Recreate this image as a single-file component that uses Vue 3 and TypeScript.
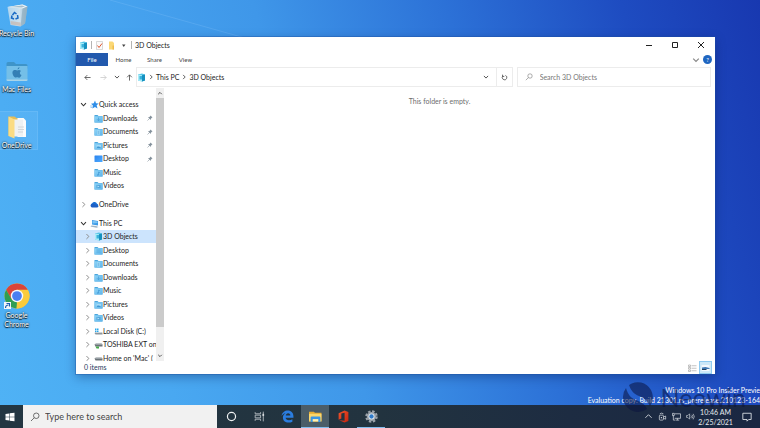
<script setup lang="ts">
import { ref } from 'vue'

interface TreeNode {
  id: string
  label: string
  icon: string
  level: 0 | 1
  open?: boolean
  expandable?: boolean
  pinned?: boolean
  spaced?: boolean
}

interface Shortcut {
  label: string
  icon: string
  row: number
  focused?: boolean
  linked?: boolean
}

const tree: TreeNode[] = [
  { id: 'quick', label: 'Quick access', icon: 'star', level: 0, open: true, expandable: true },
  { id: 'q-down', label: 'Downloads', icon: 'downloads', level: 1, pinned: true },
  { id: 'q-docs', label: 'Documents', icon: 'documents', level: 1, pinned: true },
  { id: 'q-pics', label: 'Pictures', icon: 'pictures', level: 1, pinned: true },
  { id: 'q-desk', label: 'Desktop', icon: 'screen', level: 1, pinned: true },
  { id: 'q-music', label: 'Music', icon: 'music', level: 1 },
  { id: 'q-video', label: 'Videos', icon: 'videos', level: 1 },
  { id: 'onedrive', label: 'OneDrive', icon: 'cloud', level: 0, expandable: true, spaced: true },
  { id: 'pc', label: 'This PC', icon: 'pc', level: 0, open: true, expandable: true, spaced: true },
  { id: 'p-3d', label: '3D Objects', icon: 'cube', level: 1, expandable: true },
  { id: 'p-desk', label: 'Desktop', icon: 'desktop', level: 1, expandable: true },
  { id: 'p-docs', label: 'Documents', icon: 'documents', level: 1, expandable: true },
  { id: 'p-down', label: 'Downloads', icon: 'downloads', level: 1, expandable: true },
  { id: 'p-music', label: 'Music', icon: 'music', level: 1, expandable: true },
  { id: 'p-pics', label: 'Pictures', icon: 'pictures', level: 1, expandable: true },
  { id: 'p-video', label: 'Videos', icon: 'videos', level: 1, expandable: true },
  { id: 'p-c', label: 'Local Disk (C:)', icon: 'disk', level: 1, expandable: true },
  { id: 'p-ext', label: 'TOSHIBA EXT on', icon: 'netdisk', level: 1, expandable: true },
  { id: 'p-home', label: "Home on 'Mac' (", icon: 'netdrive', level: 1, expandable: true },
]

const shortcuts: Shortcut[] = [
  { label: 'Recycle Bin', icon: 'bin', row: 1 },
  { label: 'Mac Files', icon: 'macfolder', row: 2 },
  { label: 'OneDrive', icon: 'openfolder', row: 3, focused: true },
  { label: 'Google Chrome', icon: 'chrome', row: 6, linked: true },
]

const tabs = ['Home', 'Share', 'View']

const apps = [
  { name: 'Cortana', icon: 'cortana' },
  { name: 'Task View', icon: 'taskview' },
  { name: 'Microsoft Edge', icon: 'edge' },
  { name: 'File Explorer', icon: 'explorer', state: 'active' },
  { name: 'Office', icon: 'office' },
  { name: 'Settings', icon: 'gear', state: 'running' },
]

const tray = [
  { name: 'Show hidden icons', icon: 'up-chevron' },
  { name: 'Meet Now', icon: 'meet' },
  { name: 'Network', icon: 'network' },
  { name: 'Volume', icon: 'volume' },
]

const selected = ref('p-3d')
const folderQuery = ref('')
const webQuery = ref('')
</script>

<template>
  <div class="screen">
    <svg class="sprite" width="0" height="0" aria-hidden="true">
      <defs>
        <linearGradient id="g-folder" x1="0" y1="0" x2="1" y2="1">
          <stop offset="0" stop-color="#8fd4f7" /><stop offset="1" stop-color="#5db4ea" />
        </linearGradient>
        <linearGradient id="g-screen" x1="0" y1="0" x2="1" y2="1">
          <stop offset="0" stop-color="#2a83ee" /><stop offset="1" stop-color="#4fabff" />
        </linearGradient>
        <linearGradient id="g-bin" x1="0" y1="0" x2="1" y2="0">
          <stop offset="0" stop-color="#b9d9ef" /><stop offset=".6" stop-color="#d8e6ee" /><stop offset="1" stop-color="#98b7cb" />
        </linearGradient>
        <linearGradient id="g-office" x1="0" y1="0" x2="1" y2="1">
          <stop offset="0" stop-color="#f0552c" /><stop offset="1" stop-color="#c8230f" />
        </linearGradient>
      </defs>
      <symbol id="folder" viewBox="0 0 18 18">
        <path d="M1 2h6l2 2h8v13H1z" fill="#4aa6dd" />
        <path d="M1 4.500h16v12.500H1z" fill="url(#g-folder)" />
      </symbol>
      <symbol id="downloads" viewBox="0 0 18 18">
        <use href="#folder" /><path d="M9 7v6M6 10.500l3 3 3-3" fill="none" stroke="#3f97d3" stroke-width="1.300" />
      </symbol>
      <symbol id="documents" viewBox="0 0 18 18">
        <use href="#folder" /><path d="M6 7h6v8H6z" fill="#a9def8" /><path d="M7 9h4M7 11h4M7 13h4" stroke="#4fa3d9" />
      </symbol>
      <symbol id="pictures" viewBox="0 0 18 18">
        <use href="#folder" /><path d="M5 8h9v6H5z" fill="#a5dbf7" /><path d="M5 14l3-4 2 2 2-1 2 3z" fill="#3f97d3" />
      </symbol>
      <symbol id="music" viewBox="0 0 18 18">
        <use href="#folder" /><path d="M9 14V8l3 1.500" fill="none" stroke="#3f97d3" stroke-width="1.300" /><circle cx="7.800" cy="13.800" r="1.500" fill="#3f97d3" />
      </symbol>
      <symbol id="videos" viewBox="0 0 18 18">
        <use href="#folder" /><path d="M5 8h8v6H5z" fill="#4fa3d9" /><path d="M7 9l4 2-4 2z" fill="#b8e4fa" />
      </symbol>
      <symbol id="desktop" viewBox="0 0 18 18">
        <use href="#folder" /><path d="M5 8h8M5 12h8" stroke="#4fa3d9" stroke-width="1.500" />
      </symbol>
      <symbol id="screen" viewBox="0 0 18 18"><rect x="1" y="3" width="16" height="13" rx="1" fill="url(#g-screen)" /></symbol>
      <symbol id="star" viewBox="0 0 18 18">
        <path d="M10 1l2 5.500 5.500.5-4.200 3.700L15 17l-5-3-5.500 3 1.500-6L2 7.500l5.500-.8z" fill="#2f8ee8" />
        <path d="M0 12h5M1 15h3" stroke="#7dbcf2" stroke-width="1.500" />
      </symbol>
      <symbol id="cloud" viewBox="0 0 18 18">
        <path d="M4 14a4 4 0 0 1 .3-7.500A5.500 5.500 0 0 1 14 7.500a3.500 3.500 0 0 1 .5 6.500z" fill="#1a6fd4" />
        <path d="M4 15a3.500 3.500 0 0 1-1-6.500l4-1L17 12a3 3 0 0 1-2.500 3z" fill="#1e5fc4" />
      </symbol>
      <symbol id="pc" viewBox="0 0 18 18">
        <path d="M4 2l12 2v9L4 11z" fill="#3c9ae6" /><path d="M5 3.500l10 1.500v3L5 9z" fill="#7cc4f5" />
        <path d="M3 13l9 1 5 2-4 1.500L1 15z" fill="#9fb4c4" />
      </symbol>
      <symbol id="cube" viewBox="0 0 18 18">
        <path d="M2 3l8-2 6 2v12l-6 2-8-2z" fill="#56c5e8" /><path d="M2 3l8 1.500V17l-8-2z" fill="#a9ecf7" />
        <path d="M10 4.500L16 3v12l-6 2z" fill="#1690bf" /><path d="M5 6h5v7H5z" fill="#3ab3dc" />
      </symbol>
      <symbol id="disk" viewBox="0 0 18 18">
        <path d="M1 12l3-2h11l2 2v3H3z" fill="#8d979e" /><path d="M4 10h11l2 2H2z" fill="#d0d7dc" />
        <path d="M2 3h3v3H2zM6 3h3v3H6zM2 7h3v3H2zM6 7h3v3H6z" fill="#28a8ea" />
      </symbol>
      <symbol id="netdrive" viewBox="0 0 18 18">
        <path d="M1 9l3-2h11l2 2v4H3z" fill="#6b7378" /><path d="M4 7h11l2 2H2z" fill="#cbd1d5" />
      </symbol>
      <symbol id="netdisk" viewBox="0 0 18 18">
        <use href="#netdrive" /><path d="M3 13h7v4H5z" fill="#45a849" />
      </symbol>
      <symbol id="pin" viewBox="0 0 12 12">
        <path d="M7 1l4 4-1.200.4-2 2L7.500 10 2 4.500 5 4l1.500-1.800z" fill="#84919c" /><path d="M1 11l4-4" stroke="#84919c" stroke-width="1.200" />
      </symbol>
      <symbol id="right" viewBox="0 0 10 10"><path d="M3.500 1.500L7 5 3.500 8.500" fill="none" stroke="currentColor" stroke-width="1.400" /></symbol>
      <symbol id="down" viewBox="0 0 10 10"><path d="M1.500 3.200L5 6.800l3.500-3.600" fill="none" stroke="currentColor" stroke-width="1.500" /></symbol>
      <symbol id="up-chevron" viewBox="0 0 20 20"><path d="M3 13l7-7 7 7" fill="none" stroke="currentColor" stroke-width="1.800" /></symbol>
      <symbol id="arrow" viewBox="0 0 16 16"><path d="M15 8H2M7.500 2.500L2 8l5.500 5.500" fill="none" stroke="currentColor" stroke-width="1.800" /></symbol>
      <symbol id="lens" viewBox="0 0 20 20">
        <circle cx="12.500" cy="7.500" r="5.500" fill="none" stroke="currentColor" stroke-width="1.500" />
        <path d="M8.500 11.500L2 18" stroke="currentColor" stroke-width="1.500" />
      </symbol>
      <symbol id="bin" viewBox="0 0 48 48">
        <path d="M5 8l30-5 10 4-5 34-9 6-20-3z" fill="url(#g-bin)" opacity=".92" />
        <path d="M5 8l30-5 10 4-10 4z" fill="#eaf3f8" /><path d="M10 8l24-3 6 2-7 2z" fill="#a4bdcb" />
        <path d="M35 11l10-4-5 34-9 6z" fill="#8eacbd" opacity=".7" />
        <path d="M11 36l20 3v7l-19-3z" fill="#c9b7ad" opacity=".7" />
        <path d="M15 24l4-5 4 3M25 24l1 6-5 2M18 32l-5-2 1-5" fill="none" stroke="#1768c4" stroke-width="3" />
      </symbol>
      <symbol id="macfolder" viewBox="0 0 48 48">
        <path d="M3 9q0-3 3-3h12l4 4h20q3 0 3 3v6H3z" fill="#3e94c9" />
        <path d="M3 14h42v28q0 2-3 2H6q-3 0-3-2z" fill="#74bfe8" /><path d="M3 41h42v1q0 2-3 2H6q-3 0-3-2z" fill="#aad4e8" />
        <path d="M25 21q0-4 4-5 0 4-4 5zM24 23c3-1 5-2 8 1-4 3-2 7 1 8-2 5-4 6-6 5-2-1-3-1-5 0-3 1-8-6-7-11 1-4 5-5 9-3z" fill="#347fb5" />
      </symbol>
      <symbol id="openfolder" viewBox="0 0 48 48">
        <path d="M7 3h12l4 3h15v36H7z" fill="#e3bd58" /><path d="M25 6h12l5 5v33H25z" fill="#fbfbfb" />
        <path d="M15 9h21v34H15z" fill="#eef1f3" /><path d="M26 24h12M26 29h12M26 34h10" stroke="#c8ccd0" stroke-width="1.500" />
        <path d="M7 3l12 6v38L7 42z" fill="#fbdc83" />
      </symbol>
      <symbol id="chrome" viewBox="0 0 48 48">
        <circle cx="24" cy="24" r="23" fill="#f9cb3c" />
        <path d="M24 24L13.500 30 4 12.500A23 23 0 0 1 44 12.500H24z" fill="#d9453a" />
        <path d="M4 12.500L14 30l10 5.500L23 47A23 23 0 0 1 4 12.500z" fill="#2f9e53" />
        <path d="M24 13h20.200A23 23 0 0 1 23 47l11-17z" fill="#f9cb3c" />
        <circle cx="24" cy="24" r="11.500" fill="#f6f9fc" /><circle cx="24" cy="24" r="9" fill="#4a7ff0" />
      </symbol>
      <symbol id="windows" viewBox="0 0 20 20">
        <path d="M1 4l7.500-1.100v6.600H1zM9.500 2.700L19 1.400v8.100H9.500zM1 10.500h7.500v6.600L1 16zM9.500 10.500H19v8.100l-9.500-1.300z" fill="#fff" />
      </symbol>
      <symbol id="cortana" viewBox="0 0 24 24"><circle cx="12" cy="12" r="7.500" fill="none" stroke="#f1f3f4" stroke-width="2.200" /></symbol>
      <symbol id="taskview" viewBox="0 0 24 24">
        <path d="M4 4v3h10V4M4 20v-3h10v3M4 9.500h10v5H4zM19 3v18" fill="none" stroke="#c3c9ce" stroke-width="1.500" /><path d="M17.500 7h3v4h-3z" fill="#d6dade" />
      </symbol>
      <symbol id="edge" viewBox="0 0 24 24">
        <path d="M1 11C2 4.500 7 1 12.500 1 19 1 23 5.500 23 12v2.500H8.500c.3 3 2.700 4.500 6 4.500 2.500 0 4.800-.7 6.500-1.800v4.500C19 22.800 16.500 23.300 14 23.300 7.500 23.300 3.500 19.500 3.500 14c0-3.500 2-6.500 5-8C5 6.500 2.500 8.500 1 11zm7.700-.7h8.600c0-2.600-1.500-4.300-4-4.300-2.600 0-4.200 1.800-4.600 4.300z" fill="#2b7de0" />
      </symbol>
      <symbol id="explorer" viewBox="0 0 24 24">
        <path d="M0 3h9l2 2h12v16H0z" fill="#e8ad33" /><path d="M0 7h23v14H0z" fill="#fbd76c" />
        <path d="M3 22v-8q0-2 2-2h14q2 0 2 2v8h-4v-5H7v5z" fill="#3a95e4" /><path d="M7 17h10v4H7z" fill="#fff0b8" />
      </symbol>
      <symbol id="office" viewBox="0 0 24 24">
        <path d="M14 1l7 2.500v17L14 23l-10-4 10 1V5L8 6.500v9L3 18V6z" fill="url(#g-office)" />
      </symbol>
      <symbol id="gear" viewBox="0 0 24 24">
        <circle cx="12" cy="12" r="9.500" fill="none" stroke="#9ba3ab" stroke-width="4" stroke-dasharray="4.500 2.960" />
        <circle cx="12" cy="12" r="8.500" fill="#9ba3ab" /><circle cx="12" cy="12" r="5.500" fill="#e4edf5" /><circle cx="12" cy="12" r="4" fill="#2f7ac8" />
      </symbol>
      <symbol id="meet" viewBox="0 0 20 20">
        <rect x="3" y="7" width="9" height="11" rx="2" fill="none" stroke="currentColor" stroke-width="1.500" />
        <path d="M12 11l5-2v7l-5-2M4 4q4-3 8 0" fill="none" stroke="currentColor" stroke-width="1.500" /><circle cx="7.500" cy="12.500" r="1.500" fill="currentColor" />
      </symbol>
      <symbol id="network" viewBox="0 0 20 20">
        <path d="M6 4h13v10H6M12 14v4M8 18h8M1 3h4v5H1zM3 8v10h4" fill="none" stroke="currentColor" stroke-width="1.500" />
      </symbol>
      <symbol id="volume" viewBox="0 0 20 20">
        <path d="M1 8h3l4-4v12l-4-4H1zM11 8q2 2 0 5M13.500 6q3.500 4 0 8.500M16 4q5 6 0 12.500" fill="none" stroke="currentColor" stroke-width="1.300" />
      </symbol>
      <symbol id="note" viewBox="0 0 24 24"><path d="M2 3h20v15h-6l-4 4v-4H2z" fill="none" stroke="#e6eaee" stroke-width="2" /></symbol>
    </svg>

    <main class="desktop">
      <svg class="rays" viewBox="0 0 760 405" preserveAspectRatio="none" aria-hidden="true">
        <path d="M110 0L245 38" stroke="#9cd0ff" opacity=".2" />
      </svg>

      <nav class="shortcuts" aria-label="Desktop">
        <button
          v-for="item in shortcuts"
          :key="item.label"
          type="button"
          class="shortcut"
          :class="[`row-${item.row}`, { focused: item.focused }]"
        >
          <span class="shortcut-art">
            <svg class="shortcut-icon" :class="{ large: item.linked }"><use :href="`#${item.icon}`" /></svg>
            <svg v-if="item.linked" class="link-badge" viewBox="0 0 14 14">
              <path d="M0 0h14v14H0z" fill="#f4f6f8" /><path d="M3 12q0-6 6-6M5 3h6v6" fill="none" stroke="#1c5fb0" stroke-width="2.200" />
            </svg>
          </span>
          <span class="shortcut-label" :class="{ wrap: item.linked }">{{ item.label }}</span>
        </button>
      </nav>

      <section class="window" aria-label="3D Objects">
        <header class="titlebar">
          <svg class="icon"><use href="#cube" /></svg>
          <span class="rule"></span>
          <button type="button" class="quick" aria-label="Properties">
            <svg class="icon" viewBox="0 0 18 18">
              <path d="M3 1h12v16H3z" fill="#fafafa" stroke="#b5b5b5" /><path d="M5 9l3 4 6-8" fill="none" stroke="#e0562f" stroke-width="2" />
            </svg>
          </button>
          <button type="button" class="quick" aria-label="New folder">
            <svg class="icon" viewBox="0 0 18 18"><path d="M4 1h7l3 3v13H4z" fill="#fbd877" /><path d="M11 9h3v8h-3z" fill="#eebc4c" /></svg>
          </button>
          <button type="button" class="quick" aria-label="Customize toolbar">
            <svg class="icon" viewBox="0 0 18 18"><path d="M6 7h7l-3.500 5z" fill="#444" /></svg>
          </button>
          <span class="rule"></span>
          <h1 class="title">3D Objects</h1>
          <div class="controls">
            <button type="button" aria-label="Minimize"><svg viewBox="0 0 10 10"><path d="M2 5.500h6" stroke="#222" /></svg></button>
            <button type="button" aria-label="Maximize"><svg viewBox="0 0 10 10"><path d="M2.500 2.500h5v5h-5z" fill="none" stroke="#222" /></svg></button>
            <button type="button" aria-label="Close"><svg viewBox="0 0 10 10"><path d="M2 2l6 6M8 2L2 8" stroke="#222" /></svg></button>
          </div>
        </header>

        <nav class="ribbon" aria-label="Ribbon">
          <button type="button" class="file">File</button>
          <button v-for="tab in tabs" :key="tab" type="button" class="tab">{{ tab }}</button>
          <button type="button" class="expand" aria-label="Expand ribbon"><svg><use href="#down" /></svg></button>
          <button type="button" class="help" aria-label="Help">?</button>
        </nav>

        <div class="location">
          <div class="travel">
            <button type="button" aria-label="Back"><svg class="arrow"><use href="#arrow" /></svg></button>
            <button type="button" aria-label="Forward" disabled><svg class="arrow forward"><use href="#arrow" /></svg></button>
            <button type="button" class="slim" aria-label="Recent locations"><svg class="tick"><use href="#down" /></svg></button>
            <button type="button" class="slim" aria-label="Up"><svg class="arrow upward"><use href="#arrow" /></svg></button>
          </div>
          <div class="address">
            <svg class="icon"><use href="#cube" /></svg>
            <svg class="tick"><use href="#right" /></svg>
            <a href="#this-pc">This PC</a>
            <svg class="tick"><use href="#right" /></svg>
            <a href="#3d-objects">3D Objects</a>
            <button type="button" class="history" aria-label="Previous locations"><svg class="tick"><use href="#down" /></svg></button>
            <button type="button" class="refresh" aria-label="Refresh">
              <svg viewBox="0 0 16 16"><path d="M4.500 4.500a5.200 5.200 0 1 0 5.500-1.200M3.500 1.500v4h4" fill="none" stroke="#333" stroke-width="1.600" /></svg>
            </button>
          </div>
          <label class="find">
            <svg><use href="#lens" /></svg>
            <input v-model="folderQuery" type="search" placeholder="Search 3D Objects" aria-label="Search 3D Objects" />
          </label>
        </div>

        <div class="body">
          <nav class="sidebar" aria-label="Folders">
            <ul class="tree">
              <li
                v-for="node in tree"
                :key="node.id"
                class="node"
                :class="{ child: node.level === 1, spaced: node.spaced, selected: selected === node.id }"
              >
                <button v-if="node.expandable" type="button" class="twisty" :class="{ open: node.open }" :aria-label="`Toggle ${node.label}`">
                  <svg><use :href="node.open ? '#down' : '#right'" /></svg>
                </button>
                <span v-else class="twisty"></span>
                <a :href="`#${node.id}`" class="node-link" @click.prevent="selected = node.id">
                  <svg class="icon"><use :href="`#${node.icon}`" /></svg>
                  <span>{{ node.label }}</span>
                  <svg v-if="node.pinned" class="pin"><use href="#pin" /></svg>
                </a>
              </li>
            </ul>
          </nav>
          <div class="scrollbar" aria-hidden="true">
            <span class="scroll-cap"><svg viewBox="0 0 10 10"><path d="M2 7l3-3 3 3" fill="none" stroke="#444" stroke-width="1.500" /></svg></span>
            <span class="thumb"></span>
            <span class="scroll-rest"></span>
            <span class="scroll-cap"><svg viewBox="0 0 10 10"><path d="M2 3l3 3 3-3" fill="none" stroke="#444" stroke-width="1.500" /></svg></span>
          </div>
          <div class="files"><p>This folder is empty.</p></div>
        </div>

        <footer class="status">
          <span>0 items</span>
          <div class="views">
            <button type="button" aria-label="Details view">
              <svg viewBox="0 0 18 16"><path d="M1 2h4v3H1zM1 7h4v3H1zM1 12h4v3H1zM7 3.500h10M7 8.500h10M7 13.500h10" fill="none" stroke="#9a9a9a" stroke-width="1.200" /></svg>
            </button>
            <button type="button" class="on" aria-label="Large icons view">
              <svg viewBox="0 0 18 16"><path d="M1 2h16v12H1z" fill="#f4f9fd" /><path d="M2 7l7-1 8 2v2H2z" fill="#3f79b5" /><path d="M2 10h9v2H2z" fill="#24415c" /></svg>
            </button>
          </div>
        </footer>
      </section>

      <p class="build">
        <span>Windows 10 Pro Insider Previe</span>
        <span>Evaluation copy. Build 21301.rs_prerelease.210123-164</span>
      </p>
    </main>

    <footer class="taskbar">
      <button type="button" class="start" aria-label="Start"><svg><use href="#windows" /></svg></button>
      <label class="websearch">
        <svg><use href="#lens" /></svg>
        <input v-model="webQuery" type="search" placeholder="Type here to search" aria-label="Type here to search" />
      </label>
      <button v-for="app in apps" :key="app.name" type="button" class="app" :class="app.state" :aria-label="app.name">
        <svg><use :href="`#${app.icon}`" /></svg>
      </button>
      <div class="tray">
        <button v-for="item in tray" :key="item.name" type="button" class="tray-item" :aria-label="item.name">
          <svg><use :href="`#${item.icon}`" /></svg>
        </button>
        <div class="clock"><span>10:46 AM</span><span>2/25/2021</span></div>
        <button type="button" class="notify" aria-label="Notifications"><svg><use href="#note" /></svg></button>
      </div>
    </footer>

    <div class="brand">
      <svg viewBox="0 0 30 30" aria-hidden="true">
        <path d="M6 3a15 15 0 0 1 22 5c3 6 2 12-1 16-3-6-6-8-11-10S8 9 6 3z" />
        <path d="M3 6c2 7 5 10 10 12s9 4 11 9A15 15 0 0 1 3 6z" />
      </svg>
      <span>Neowin</span>
    </div>
  </div>
</template>

<style>
body {
  margin: 0;
}
</style>

<style scoped>
.screen {
  position: relative;
  display: flex;
  flex-direction: column;
  min-height: 100vh;
  overflow: hidden;
  font-family: Lato, "Open Sans", sans-serif;
  font-size: 7px;
  line-height: 9px;
  color: #222;
}
.sprite {
  position: absolute;
}
svg {
  display: block;
  flex: none;
}
button {
  display: flex;
  align-items: center;
  justify-content: center;
  margin: 0;
  padding: 0;
  border: 0;
  background: none;
  color: inherit;
  font: inherit;
}
a {
  color: inherit;
  text-decoration: none;
}
input {
  flex: 1;
  min-width: 0;
  padding: 0;
  border: 0;
  outline: 0;
  background: none;
  color: inherit;
  font: inherit;
}
input::placeholder {
  color: inherit;
  opacity: 1;
}
.icon {
  width: 9px;
  height: 9px;
}

/* Desktop */
.desktop {
  position: relative;
  display: flex;
  flex: 1;
  overflow: hidden;
  background: linear-gradient(74deg, #4fb2f5 0%, #49a8f1 20%, #3f97e9 42%, #2c71d7 64%, #1e4cc1 84%, #1838b0 100%);
}
.rays {
  position: absolute;
  inset: 0;
  width: 100%;
  height: 100%;
}
.shortcuts {
  position: relative;
  display: grid;
  grid-template-rows: repeat(6, 56px);
  grid-template-columns: 37px;
  align-items: start;
}
.shortcut {
  flex-direction: column;
  gap: 2px;
  height: 37px;
  padding: 3px 4px 0 0;
  color: #fff;
  justify-content: flex-start;
}
.shortcut.focused {
  background: rgba(120, 195, 250, 0.25);
  outline: 1px solid rgba(150, 210, 255, 0.35);
}
.row-1 { grid-row: 1; }
.row-2 { grid-row: 2; }
.row-3 { grid-row: 3; }
.row-6 { grid-row: 6; }
.shortcut-art {
  position: relative;
}
.shortcut-icon {
  width: 24px;
  height: 24px;
}
.shortcut-icon.large {
  width: 26px;
  height: 26px;
}
.link-badge {
  position: absolute;
  left: 0;
  bottom: 0;
  width: 7px;
  height: 7px;
}
.shortcut-label {
  text-shadow: 0 1px 1px #000, 0 0 2px #000;
  white-space: nowrap;
}
.shortcut-label.wrap {
  white-space: normal;
}

/* Explorer window */
.window {
  position: absolute;
  top: 37px;
  right: 45px;
  bottom: 31px;
  left: 76px;
  display: flex;
  flex-direction: column;
  background: #fff;
  box-shadow: 0 0 0 1px rgba(30, 80, 160, 0.35), 0 3px 10px rgba(0, 20, 70, 0.35);
}
.titlebar {
  display: flex;
  align-items: center;
  gap: 3px;
  height: 16px;
  padding: 0 1px 0 3px;
}
.rule {
  width: 1px;
  height: 8px;
  background: #b4b4b4;
}
.quick {
  width: 9px;
}
.title {
  margin: 0;
  font-size: 7px;
  font-weight: 400;
}
.controls {
  display: flex;
  height: 100%;
  margin-left: auto;
}
.controls button {
  width: 26px;
}
.controls svg {
  width: 10px;
  height: 10px;
}
.ribbon {
  display: flex;
  align-items: stretch;
  height: 13px;
  padding-right: 3px;
  font-size: 6px;
}
.file {
  width: 32px;
  background: #2259ad;
  color: #fff;
}
.tab {
  width: 31px;
  color: #444;
}
.expand {
  width: 14px;
  margin-left: auto;
  color: #888;
}
.expand svg {
  width: 8px;
  height: 8px;
}
.help {
  align-self: center;
  width: 9px;
  height: 9px;
  border-radius: 50%;
  background: #1f66c1;
  color: #fff;
}
.location {
  display: flex;
  align-items: stretch;
  gap: 4px;
  height: 20px;
  margin-top: 1px;
  padding-right: 4px;
}
.travel {
  display: flex;
  padding-left: 3px;
}
.travel button {
  width: 16px;
}
.travel .slim {
  width: 12px;
}
.travel + .address {
  margin-left: -3px;
}
.arrow {
  width: 7px;
  height: 7px;
  color: #444;
}
.forward {
  transform: rotate(180deg);
  color: #c9c9c9;
}
.upward {
  transform: rotate(90deg);
}
.tick {
  width: 6px;
  height: 6px;
  color: #444;
}
.address {
  display: flex;
  flex: 382;
  align-items: center;
  gap: 2px;
  border: 1px solid #ececec;
}
.history {
  width: 16px;
  height: 100%;
  margin-left: auto;
}
.refresh {
  width: 16px;
  height: 100%;
  border-left: 1px solid #ececec;
}
.refresh svg {
  width: 7px;
  height: 7px;
}
.find {
  display: flex;
  flex: 189;
  align-items: center;
  gap: 7px;
  padding-left: 7px;
  border: 1px solid #ececec;
  color: #777;
}
.find svg {
  width: 8px;
  height: 8px;
}
.body {
  display: flex;
  flex: 1;
  min-height: 0;
  margin-top: 1px;
}
.sidebar {
  width: 80px;
  overflow: hidden;
}
.tree {
  display: flex;
  flex-direction: column;
  box-sizing: border-box;
  height: calc(100% + 4px);
  margin: 0;
  padding: 10px 0 0;
  list-style: none;
}
.node {
  display: flex;
  flex: 1;
  align-items: center;
  gap: 3px;
  min-height: 0;
  padding-left: 3px;
  white-space: nowrap;
}
.node.child {
  padding-left: 7px;
}
.node.spaced {
  margin-top: 5px;
}
.node.selected {
  background: #cce4fd;
}
.twisty {
  flex: none;
  width: 8px;
  color: #8a8a8a;
}
.twisty.open {
  color: #333;
}
.twisty svg {
  width: 7px;
  height: 7px;
}
.node-link {
  display: flex;
  flex: 1;
  align-items: center;
}
.pin {
  width: 6px;
  height: 6px;
  margin-right: 3px;
  margin-left: auto;
}
.scrollbar {
  display: flex;
  flex-direction: column;
  width: 8px;
  background: #f0f0f0;
}
.scroll-cap {
  display: flex;
  align-items: center;
  justify-content: center;
  height: 10px;
}
.scroll-cap svg {
  width: 6px;
  height: 6px;
}
.thumb {
  flex: 229;
  background: #cbcbcb;
}
.scroll-rest {
  flex: 24;
}
.files {
  flex: 1;
  padding-top: 9px;
  color: #6d6d6d;
  text-align: center;
}
.files p {
  margin: 0;
}
.status {
  display: flex;
  align-items: center;
  justify-content: space-between;
  height: 13px;
  padding: 0 3px 0 8px;
  color: #1e395b;
}
.views {
  display: flex;
  height: 100%;
}
.views button {
  width: 13px;
}
.views .on {
  background: #cce8f8;
  box-shadow: inset 0 0 0 1px #8ecaf0;
}
.views svg {
  width: 9px;
  height: 8px;
}

/* Build notice */
.build {
  position: absolute;
  right: 0;
  bottom: 0;
  display: flex;
  flex-direction: column;
  align-items: flex-end;
  margin: 0;
  color: #fff;
  line-height: 10px;
  white-space: nowrap;
}
.brand {
  position: absolute;
  right: 14px;
  bottom: 15px;
  display: flex;
  align-items: center;
  gap: 8px;
  color: #0a1440;
  font-size: 25px;
  line-height: 32px;
  opacity: 0.55;
  pointer-events: none;
}
.brand svg {
  width: 30px;
  height: 30px;
  fill: currentColor;
}

/* Taskbar */
.taskbar {
  display: flex;
  height: 23px;
  background: linear-gradient(90deg, #233642 0%, #22333f 50%, #1d2c42 75%, #1a2742 100%);
  color: #e6eaee;
}
.start {
  width: 23px;
  padding-right: 4px;
}
.start svg {
  width: 10px;
  height: 10px;
}
.websearch {
  display: flex;
  flex: 0 1 180px;
  align-items: center;
  gap: 5px;
  padding: 0 7px;
  background: #f1f1f1;
  color: #444;
  font-size: 9px;
}
.websearch svg {
  width: 10px;
  height: 10px;
}
.app {
  width: 28px;
}
.app svg {
  width: 13px;
  height: 13px;
}
.app.active {
  background: #4b5d68;
  box-shadow: inset 0 -1px #80bdee;
}
.app.running {
  box-shadow: inset 0 -1px #80bdee;
}
.tray {
  display: flex;
  margin-left: auto;
}
.tray-item {
  width: 14px;
}
.tray-item svg {
  width: 9px;
  height: 9px;
}
.clock {
  display: flex;
  flex-direction: column;
  align-items: center;
  justify-content: center;
  width: 37px;
  line-height: 10px;
}
.notify {
  width: 26px;
}
.notify svg {
  width: 10px;
  height: 10px;
}
</style>
